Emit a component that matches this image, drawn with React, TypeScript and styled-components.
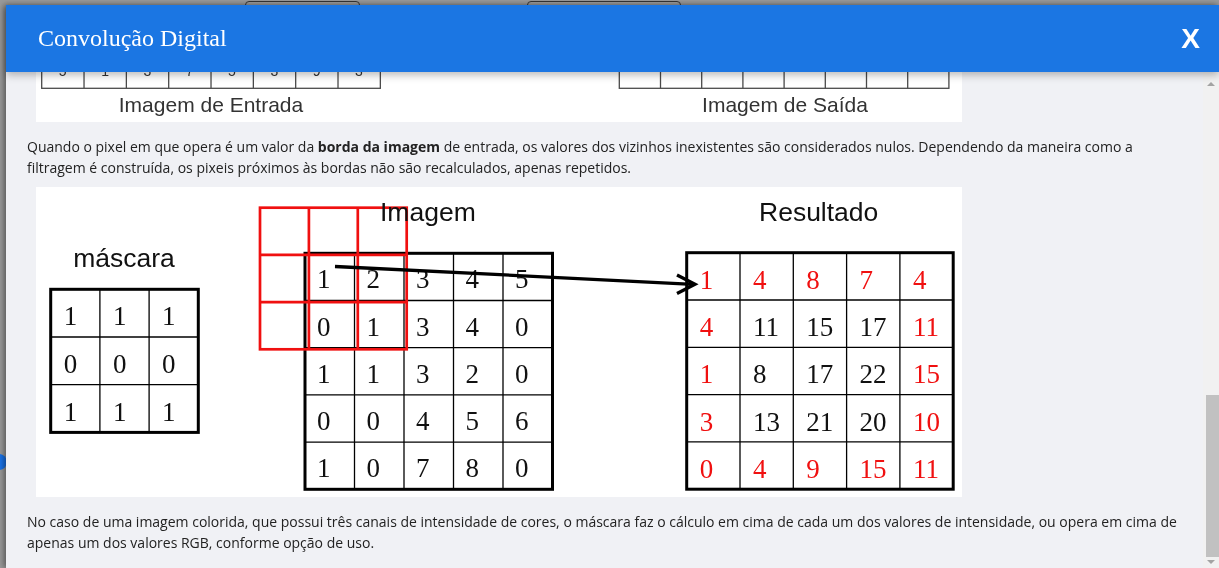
import { useLayoutEffect, useRef } from "react";
import styled, { createGlobalStyle } from "styled-components";

const GlobalStyle = createGlobalStyle`
  html, body {
    margin: 0;
    height: 100%;
  }
  body {
    font-family: "Open Sans", "Liberation Sans", sans-serif;
    background: #f7f7f7;
    overflow: hidden;
  }
`;

type Cell = string | number;

interface GridProps {
    x: number;
    y: number;
    cols: number;
    rows: number;
    cw: number;
    ch: number;
    stroke: string;
    inner: number;
    outer: number;
    values?: Cell[][];
    isRed?: (r: number, c: number) => boolean;
    fontSize?: number;
    font?: string;
    dx?: number;
    dy?: number;
    color?: string;
    anchor?: "start" | "middle";
}

const Grid = ({
    x, y, cols, rows, cw, ch, stroke, inner, outer, values, isRed,
    fontSize = 27, font = "Liberation Serif", dx = 13, dy = 36, color = "#111", anchor = "start"
}: GridProps) => {
    const w = cols * cw;
    const h = rows * ch;
    return (
        <g>
            {Array.from({ length: cols - 1 }, (_, i) => (
                <line key={"v" + i} x1={x + (i + 1) * cw} y1={y} x2={x + (i + 1) * cw} y2={y + h} stroke={stroke} strokeWidth={inner} />
            ))}
            {Array.from({ length: rows - 1 }, (_, j) => (
                <line key={"h" + j} x1={x} y1={y + (j + 1) * ch} x2={x + w} y2={y + (j + 1) * ch} stroke={stroke} strokeWidth={inner} />
            ))}
            <rect x={x} y={y} width={w} height={h} fill="none" stroke={stroke} strokeWidth={outer} />
            {values?.map((row, r) =>
                row.map((v, c) => (
                    <text
                        key={r + "-" + c}
                        x={x + c * cw + dx}
                        y={y + r * ch + dy}
                        fontFamily={font}
                        fontSize={fontSize}
                        textAnchor={anchor}
                        fill={isRed && isRed(r, c) ? "#f01010" : color}
                    >
                        {v}
                    </text>
                ))
            )}
        </g>
    );
};

const inputValues: Cell[][] = [
    [2, 4, 1, 3, 5, 2, 0, 1],
    [3, 7, 2, 8, 1, 4, 6, 2],
    [1, 0, 5, 3, 9, 2, 4, 7],
    [6, 2, 8, 1, 3, 7, 5, 0],
    [4, 9, 3, 6, 2, 8, 1, 5],
    [0, 3, 7, 4, 6, 1, 9, 2],
    [8, 5, 2, 9, 4, 3, 7, 6],
    [5, 1, 3, 7, 5, 3, 9, 3],
];

const outputValues: Cell[][] = [
    ["", "", "", "", "", "", "", ""],
    ["", 4, 3, 5, 4, 3, 3, ""],
    ["", 4, 4, 5, 4, 5, 3, ""],
    ["", 4, 4, 5, 4, 4, 4, ""],
    ["", 4, 5, 4, 4, 4, 4, ""],
    ["", 5, 5, 4, 4, 5, 4, ""],
    ["", "", "", "", "", "", "", ""],
    ["", "", "", "", "", "", "", ""],
];

const maskValues: Cell[][] = [
    [1, 1, 1],
    [0, 0, 0],
    [1, 1, 1],
];

const imageValues: Cell[][] = [
    [1, 2, 3, 4, 5],
    [0, 1, 3, 4, 0],
    [1, 1, 3, 2, 0],
    [0, 0, 4, 5, 6],
    [1, 0, 7, 8, 0],
];

const resultValues: Cell[][] = [
    [1, 4, 8, 7, 4],
    [4, 11, 15, 17, 11],
    [1, 8, 17, 22, 15],
    [3, 13, 21, 20, 10],
    [0, 4, 9, 15, 11],
];

const isBorder = (r: number, c: number) => r === 0 || r === 4 || c === 0 || c === 4;

// the input / output tables, mostly scrolled out of view
const EdgeFigure = () => (
    <Figure viewBox="36 -178 926 300" height={300}>
        <Grid x={41.7} y={-125.7} cols={8} rows={8} cw={42.33} ch={26.75} stroke="#4a4a4a" inner={1.3} outer={1.3}
            values={inputValues} fontSize={14} font="Liberation Sans" dx={21} dy={14.5} color="#333" anchor="middle" />
        <Grid x={619.3} y={-125.7} cols={8} rows={8} cw={41.2} ch={26.75} stroke="#4a4a4a" inner={1.3} outer={1.3}
            values={outputValues} fontSize={14} font="Liberation Sans" dx={20.6} dy={14.5} color="#333" anchor="middle" />
        <Caption x={211} y={111.5}>Imagem de Entrada</Caption>
        <Caption x={785} y={111.5}>Imagem de Saída</Caption>
    </Figure>
);

const ConvolutionFigure = () => (
    <Figure viewBox="36 187 926 310" height={310}>
        <Label x={124} y={267} textAnchor="middle">máscara</Label>
        <Grid x={50.7} y={289.3} cols={3} rows={3} cw={49.2} ch={47.7} stroke="#000" inner={1.3} outer={3} values={maskValues} />
        <Grid x={305} y={253.3} cols={5} rows={5} cw={49.5} ch={47.2} stroke="#000" inner={1.3} outer={3} values={imageValues} dx={12} dy={35} />
        <Grid x={260} y={207.7} cols={3} rows={3} cw={48.9} ch={47.2} stroke="#f01010" inner={2.7} outer={2.7} />
        <Label x={380} y={221}>Imagem</Label>
        <Label x={759} y={221}>Resultado</Label>
        <Grid x={686.7} y={252.7} cols={5} rows={5} cw={53.3} ch={47.3} stroke="#000" inner={1.3} outer={3}
            values={resultValues} isRed={isBorder} dx={13} dy={36} />
        <line x1={335} y1={266.5} x2={693} y2={284.3} stroke="#000" strokeWidth={3.3} />
        <polyline points="677,275 695,284.3 677,293.5" fill="none" stroke="#000" strokeWidth={3.3} strokeLinejoin="miter" />
    </Figure>
);

const App = () => {
    const bodyRef = useRef<HTMLDivElement>(null);

    useLayoutEffect(() => {
        if (bodyRef.current) bodyRef.current.scrollTop = bodyRef.current.scrollHeight;
    }, []);

    return (
        <>
            <GlobalStyle />
            <PageBehind>
                <PageBar>
                    <GhostButton $w={115} />
                    <GhostButton $w={154} />
                </PageBar>
            </PageBehind>
            <Overlay />
            <Fab />
            <Modal>
                <Header>
                    <Title>Convolução Digital</Title>
                    <Close>X</Close>
                </Header>
                <Main>
                    <Body ref={bodyRef}>
                        <Paragraph>
                            A convolução digital é uma operação de vizinhança: cada pixel da imagem de saída é calculado a partir
                            do pixel correspondente da imagem de entrada e dos pixels que estão ao seu redor, ponderados pelos
                            valores de uma máscara (ou kernel).
                        </Paragraph>
                        <Paragraph>
                            A máscara é posicionada sobre cada pixel da imagem de entrada. Os valores sobrepostos são
                            multiplicados pelos pesos correspondentes da máscara e os produtos são somados, gerando o novo valor
                            do pixel central.
                        </Paragraph>
                        <Paragraph>
                            Esse processo é repetido para todos os pixels, percorrendo a imagem linha por linha, da esquerda para
                            a direita e de cima para baixo, até que a imagem de saída esteja completa.
                        </Paragraph>
                        <EdgeFigure />
                        <Paragraph>
                            Quando o pixel em que opera é um valor da <strong>borda da imagem</strong> de entrada, os valores dos
                            vizinhos inexistentes são considerados nulos. Dependendo da maneira como a filtragem é construída, os
                            pixeis próximos às bordas não são recalculados, apenas repetidos.
                        </Paragraph>
                        <ConvolutionFigure />
                        <Paragraph>
                            No caso de uma imagem colorida, que possui três canais de intensidade de cores, o máscara faz o
                            cálculo em cima de cada um dos valores de intensidade, ou opera em cima de apenas um dos valores RGB,
                            conforme opção de uso.
                        </Paragraph>
                    </Body>
                    <Rail>
                        <RailButton>
                            <Arrow $up />
                        </RailButton>
                        <Track>
                            <Thumb />
                        </Track>
                        <RailButton $short>
                            <Arrow />
                        </RailButton>
                    </Rail>
                </Main>
            </Modal>
        </>
    );
};

const PageBehind = styled.div`
  height: 100vh;
  background: #f7f7f7;
`;

const PageBar = styled.div`
  display: flex;
  gap: 167px;
  padding: 1px 0 0 245px;
`;

const GhostButton = styled.div<{ $w: number }>`
  width: ${p => p.$w}px;
  height: 30px;
  box-sizing: border-box;
  border: 1px solid #555;
  border-radius: 4px;
  background: #fff;
`;

const Overlay = styled.div`
  position: fixed;
  inset: 0;
  background: rgba(0, 0, 0, 0.38);
`;

const Fab = styled.div`
  position: fixed;
  left: -9px;
  top: 454px;
  width: 16px;
  height: 16px;
  border-radius: 50%;
  background: #1a73e8;
`;

const Modal = styled.div`
  position: fixed;
  top: 5px;
  left: 6px;
  right: 0;
  bottom: 0;
  display: flex;
  flex-direction: column;
  background: #f0f1f5;
  box-shadow: -2px 0 6px rgba(0, 0, 0, 0.45);
`;

const Header = styled.div`
  flex: none;
  height: 67px;
  display: flex;
  align-items: center;
  justify-content: space-between;
  padding: 0 19px 0 32px;
  background: #1b76e3;
  box-shadow: 0 3px 8px rgba(0, 0, 0, 0.28);
  position: relative;
  z-index: 1;
`;

const Title = styled.h1`
  margin: 0 0 1px;
  font-family: "Liberation Serif", "Times New Roman", serif;
  font-weight: 400;
  font-size: 24px;
  color: #fff;
`;

const Close = styled.button`
  border: 0;
  padding: 0;
  background: none;
  font-family: "Liberation Sans", Arial, sans-serif;
  font-weight: 700;
  font-size: 28px;
  line-height: 1;
  color: #fff;
  cursor: pointer;
`;

const Main = styled.div`
  flex: 1;
  min-height: 0;
  display: flex;
`;

const Body = styled.div`
  flex: 1;
  min-width: 0;
  overflow-y: auto;
  overflow-x: hidden;
  padding: 0 18px 6px 21px;
  scrollbar-width: none;

  &::-webkit-scrollbar {
    display: none;
  }
`;

const Rail = styled.div`
  flex: none;
  width: 16px;
  display: flex;
  flex-direction: column;
  background: #f1f1f1;
`;

const RailButton = styled.div<{ $short?: boolean }>`
  height: ${p => (p.$short ? 11 : 17)}px;
  display: flex;
  align-items: ${p => (p.$short ? "flex-start" : "center")};
  justify-content: center;
  padding-top: ${p => (p.$short ? 3 : 6)}px;
  box-sizing: border-box;
`;

const Arrow = styled.div<{ $up?: boolean }>`
  width: 0;
  height: 0;
  border-left: 4px solid transparent;
  border-right: 4px solid transparent;
  ${p => (p.$up ? "border-bottom: 4px solid #a3a3a3;" : "border-top: 4px solid #a3a3a3;")}
`;

const Track = styled.div`
  flex: 1;
  display: flex;
  flex-direction: column;
  justify-content: flex-end;
`;

const Thumb = styled.div`
  height: 162px;
  margin-left: 3px;
  background: #c1c1c1;
`;

const Paragraph = styled.p`
  margin: 15px 0 9px;
  font-family: "Open Sans", "Liberation Sans", sans-serif;
  font-size: 14px;
  line-height: 20.5px;
  color: #222;

  strong {
    font-weight: 700;
  }
`;

const Figure = styled.svg`
  display: block;
  width: 926px;
  margin-left: 9px;
  background: #fff;
`;

const Label = styled.text`
  font-family: "Liberation Sans", Arial, sans-serif;
  font-size: 26.5px;
  fill: #111;
`;

const Caption = styled.text`
  font-family: "Liberation Sans", Arial, sans-serif;
  font-size: 21px;
  fill: #333;
  text-anchor: middle;
`;

export default App;
